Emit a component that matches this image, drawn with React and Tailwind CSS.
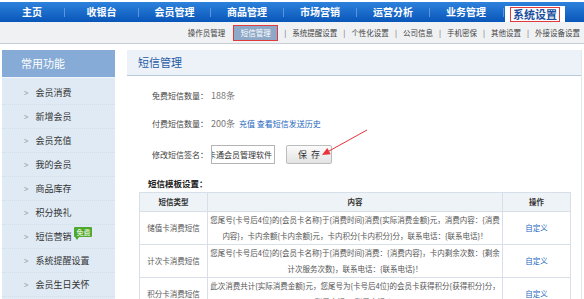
const navItems = [
  { label: "主页", w: "w-[64px]" },
  { label: "收银台", w: "w-[73px]" },
  { label: "会员管理", w: "w-[71px]" },
  { label: "商品管理", w: "w-[72px]" },
  { label: "市场营销", w: "w-[72px]" },
  { label: "运营分析", w: "w-[72px]" },
  { label: "业务管理", w: "w-[72px]" },
];

const subItems = ["系统提醒设置", "个性化设置", "公司信息", "手机密保", "其他设置", "外接设备设置"];

const sideItems = ["会员消费", "新增会员", "会员充值", "我的会员", "商品库存", "积分换礼", "短信营销", "系统提醒设置", "会员生日关怀"];

const rows = [
  {
    type: "储值卡消费短信",
    lines: [
      "您尾号{卡号后4位}的{会员卡名称}于{消费时间}消费{实际消费金额}元，消费内容：{消费",
      "内容}，卡内余额{卡内余额}元，卡内积分{卡内积分}分，联系电话：{联系电话}！",
    ],
  },
  {
    type: "计次卡消费短信",
    lines: [
      "您尾号{卡号后4位}的{会员卡名称}于{消费时间}消费：{消费内容}，卡内剩余次数：{剩余",
      "计次服务次数}，联系电话：{联系电话}！",
    ],
  },
  {
    type: "积分卡消费短信",
    lines: [
      "此次消费共计{实际消费金额}元，您尾号为{卡号后4位}的会员卡获得积分{获得积分}分，",
      "联系电话：{联系电话}！",
    ],
  },
];

function App() {
  return (
    <div className="w-[584px] h-[299px] overflow-hidden bg-white font-['Noto_Sans_CJK_SC',sans-serif] text-[#333]">
      {/* Top Nav */}
      <div className="pt-[2px] bg-white">
        <div className="h-[20px] bg-linear-to-b from-[#2d82dc] to-[#0856b9] flex items-center">
          {navItems.map((item, i) => (
            <div key={item.label} className="flex items-center">
              {i > 0 && <span className="w-px h-[9px] bg-[#5b95de]" />}
              <div className={`${item.w} text-center text-white text-[10px] font-bold leading-none`}>{item.label}</div>
            </div>
          ))}
          <span className="w-px h-[9px] bg-[#5b95de] ml-[1px]" />
          <div className="ml-[1px] self-end h-[16px] w-[60px] bg-white flex justify-center">
            <div className="mt-[1px] h-[15px] w-[50px] border border-[#e0393e] flex items-center justify-center text-[11px] font-bold text-[#1b4f9e] leading-none">
              系统设置
            </div>
          </div>
        </div>
      </div>

      {/* Sub Nav */}
      <div className="h-[22px] bg-[#eff1f3] border-b border-[#c8ced6] flex items-center justify-end pr-[4px] text-[7.5px] text-[#444] leading-none">
        <span>操作员管理</span>
        <span className="ml-[8px] h-[16px] w-[45px] bg-[#8ea8c8] border border-[#e0393e] text-white flex items-center justify-center">短信管理</span>
        {subItems.map((s) => (
          <span key={s} className="flex items-center">
            <span className="mx-[6px] text-[#666]">|</span>
            <span>{s}</span>
          </span>
        ))}
      </div>

      {/* Body */}
      <div className="flex pt-[6px]">
        {/* Sidebar */}
        <div className="ml-[2px] w-[113px]">
          <div className="h-[27px] bg-[#86abd6] text-white text-[11px] pl-[19px] flex items-center">常用功能</div>
          <div className="h-px bg-[#eef4f9]" />
          <div className="bg-[#dfeaf4] pt-[3px] h-[230px]">
            {sideItems.map((s) => (
              <div key={s} className="h-[24px] flex items-center pl-[22px] border-b border-dotted border-[#cfdde9] text-[9px] text-[#333]">
                <span className="text-[#999] text-[8px] mr-[7px] scale-y-110">&gt;</span>
                <span>{s}</span>
                {s === "短信营销" && (
                  <span className="relative -top-[5px] ml-[3px] bg-[#4fa82b] text-white text-[7px] leading-[10px] px-[2px] rounded-[1px]">
                    免费
                    <span className="absolute left-[1px] -bottom-[3px] w-0 h-0 border-l-[2px] border-r-[2px] border-t-[3px] border-l-transparent border-r-transparent border-t-[#4fa82b]" />
                  </span>
                )}
              </div>
            ))}
          </div>
        </div>

        {/* Main */}
        <div className="relative ml-[12px] w-[455px] h-[260px] border-r border-[#dfe7ef]">
          <div className="h-[26px] bg-[#ecf2f7] border-b border-[#b8c8d8] flex items-center pl-[11px] text-[11px] text-[#1f5aa6]">
            短信管理
          </div>

          <div className="pt-[6px] pl-[25px]">
            <div className="h-[28px] flex items-center">
              <span className="w-[59px] text-[8px] text-[#444]">免费短信数量：</span>
              <span className="text-[9px] text-[#777]">188条</span>
            </div>
            <div className="h-[28px] flex items-center">
              <span className="w-[59px] text-[8px] text-[#444]">付费短信数量：</span>
              <span className="text-[9px] text-[#777]">200条</span>
              <span className="ml-[4px] text-[8px] text-[#2468c0]">充值 查看短信发送历史</span>
            </div>
            <div className="mt-[7px] h-[19px] flex items-center">
              <span className="w-[59px] text-[8px] text-[#444]">修改短信签名：</span>
              <div className="w-[64px] h-[19px] border border-[#b4b4b4] flex items-center justify-end overflow-hidden pr-[2px] text-[8px] text-[#333] whitespace-nowrap">
                卡通会员管理软件
              </div>
              <button className="ml-[11px] w-[46px] h-[19px] border border-[#bdbdbd] rounded-[2px] bg-linear-to-b from-[#fbfbfb] to-[#e3e3e3] text-[9px] text-[#333]">
                保&nbsp;&nbsp;存
              </button>
            </div>
          </div>

          <div className="mt-[12px] ml-[21px] h-[14px] text-[8.5px] font-bold text-[#222] leading-[14px]">短信模板设置：</div>

          <table className="mt-[2px] ml-[12px] w-[431px] border-collapse text-[7.5px] table-fixed">
            <thead>
              <tr className="h-[19px] bg-[#eef3f7]">
                <th className="w-[68px] border border-[#d7e0e9] font-bold text-[#333]">短信类型</th>
                <th className="w-[295px] border border-[#d7e0e9] font-bold text-[#333]">内容</th>
                <th className="w-[68px] border border-[#d7e0e9] font-bold text-[#333]">操作</th>
              </tr>
            </thead>
            <tbody>
              {rows.map((r) => (
                <tr key={r.type} className="h-[33px]">
                  <td className="border border-[#d7e0e9] text-center text-[#555]">{r.type}</td>
                  <td className="border border-[#d7e0e9] text-center text-[#555] leading-[16px] overflow-hidden">
                    {r.lines.map((l) => (
                      <div key={l} className="whitespace-nowrap overflow-hidden">{l}</div>
                    ))}
                  </td>
                  <td className="border border-[#d7e0e9] text-center text-[#2468c0]">自定义</td>
                </tr>
              ))}
            </tbody>
          </table>

          {/* Red arrow */}
          <svg className="absolute left-0 top-0 pointer-events-none" width="455" height="260" viewBox="0 0 455 260">
            <line x1="240" y1="80" x2="201" y2="101.6" stroke="#e8313a" strokeWidth="1" />
            <polygon points="195,105 203.7,104.2 200.3,98" fill="#e8313a" />
          </svg>
        </div>
      </div>
    </div>
  );
}

export default App;
